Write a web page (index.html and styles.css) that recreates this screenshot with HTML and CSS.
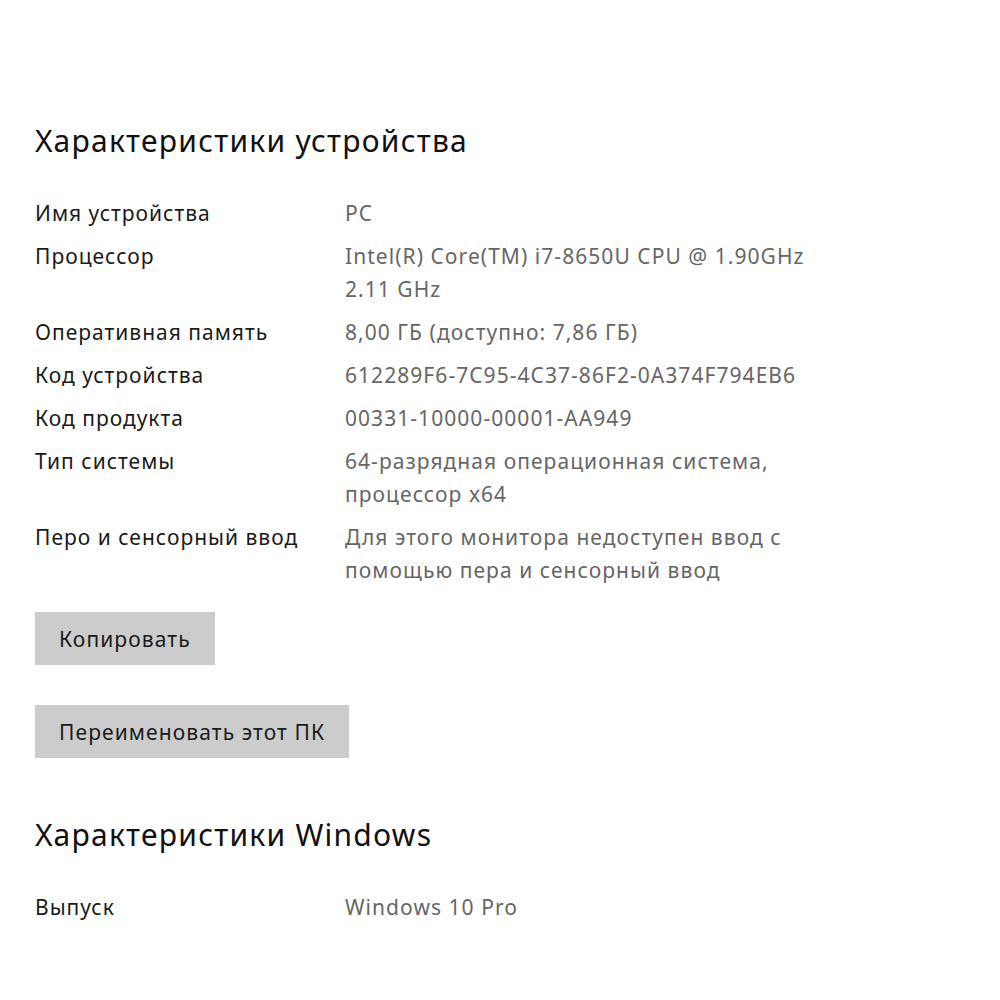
FILE: index.html
```html
<!DOCTYPE html>
<html lang="ru">
<head>
    <meta charset="UTF-8">
    <meta name="viewport" content="width=device-width, initial-scale=1.0">
    <title>О программе</title>
    <link rel="stylesheet" href="styles.css">
</head>
<body>

    <div class="page">
        <h2 class="section-title">Характеристики устройства</h2>

        <div class="spec-list">
            <div class="spec-row">
                <div class="spec-name">Имя устройства</div>
                <div class="spec-value">PC</div>
            </div>
            <div class="spec-row">
                <div class="spec-name">Процессор</div>
                <div class="spec-value">Intel(R) Core(TM) i7-8650U CPU @ 1.90GHz<br>2.11 GHz</div>
            </div>
            <div class="spec-row">
                <div class="spec-name">Оперативная память</div>
                <div class="spec-value">8,00 ГБ (доступно: 7,86 ГБ)</div>
            </div>
            <div class="spec-row">
                <div class="spec-name">Код устройства</div>
                <div class="spec-value">612289F6-7C95-4C37-86F2-0A374F794EB6</div>
            </div>
            <div class="spec-row">
                <div class="spec-name">Код продукта</div>
                <div class="spec-value">00331-10000-00001-AA949</div>
            </div>
            <div class="spec-row">
                <div class="spec-name">Тип системы</div>
                <div class="spec-value">64-разрядная операционная система,<br>процессор x64</div>
            </div>
            <div class="spec-row">
                <div class="spec-name">Перо и сенсорный ввод</div>
                <div class="spec-value">Для этого монитора недоступен ввод с<br>помощью пера и сенсорный ввод</div>
            </div>
        </div>

        <div class="actions">
            <button class="action-btn">Копировать</button>
            <button class="action-btn">Переименовать этот ПК</button>
        </div>

        <h2 class="section-title">Характеристики Windows</h2>

        <div class="spec-list">
            <div class="spec-row">
                <div class="spec-name">Выпуск</div>
                <div class="spec-value">Windows 10 Pro</div>
            </div>
        </div>
    </div>

</body>
</html>
```

FILE: styles.css
```css
body {
    margin: 0;
    background-color: #fff;
    font-family: "Noto Sans", "Open Sans", sans-serif;
    color: #1a1a1a;
}
.page {
    padding: 121px 0 0 35px;
}
.section-title {
    margin: 0;
    font-size: 30px;
    font-weight: normal;
    letter-spacing: 1.25px;
    line-height: 40px;
    color: #111;
}
.spec-list {
    margin-top: 36px;
}
.spec-row {
    display: grid;
    grid-template-columns: 310px auto;
    font-size: 21px;
    letter-spacing: 1px;
    line-height: 33px;
    margin-bottom: 10px;
}
.spec-value {
    color: #666;
    letter-spacing: 1.05px;
}
.actions {
    display: flex;
    flex-direction: column;
    align-items: flex-start;
    gap: 40px;
    margin-top: 25px;
    margin-bottom: 57px;
}
.action-btn {
    height: 53px;
    padding: 0 24px;
    border: none;
    background-color: #ccc;
    font-family: inherit;
    font-size: 21px;
    letter-spacing: 1.1px;
    color: #1a1a1a;
}
```
